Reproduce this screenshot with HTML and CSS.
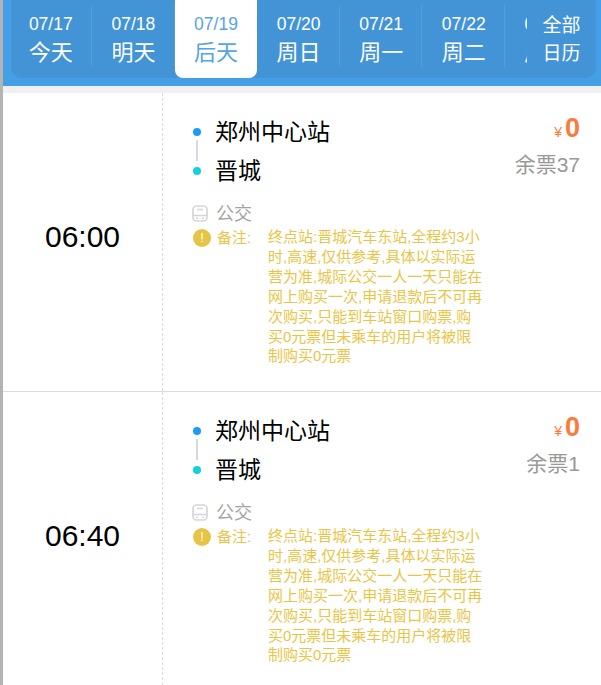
FILE: index.html
```html
<!DOCTYPE html>
<html lang="zh-CN">
<head>
    <meta charset="UTF-8">
    <meta name="viewport" content="width=device-width, initial-scale=1.0">
    <title>班次列表</title>
    <link rel="stylesheet" href="styles.css">
</head>
<body>
    <!-- Date bar -->
    <div class="date-bar">
        <div class="date-inner">
            <div class="date-list">
                <div class="date-item"><span class="date-day">07/17</span><span class="date-name">今天</span></div>
                <div class="date-item"><span class="date-day">07/18</span><span class="date-name">明天</span></div>
                <div class="date-item active"><span class="date-day">07/19</span><span class="date-name">后天</span></div>
                <div class="date-item"><span class="date-day">07/20</span><span class="date-name">周日</span></div>
                <div class="date-item"><span class="date-day">07/21</span><span class="date-name">周一</span></div>
                <div class="date-item"><span class="date-day">07/22</span><span class="date-name">周二</span></div>
                <div class="date-item"><span class="date-day">07/23</span><span class="date-name">周三</span></div>
            </div>
            <div class="date-all"><span>全部</span><span>日历</span></div>
        </div>
    </div>
    <div class="gap"></div>

    <!-- Trips -->
    <div class="trip">
        <div class="trip-time">06:00</div>
        <div class="trip-main">
            <div class="trip-top">
                <div class="stations">
                    <div class="station start">郑州中心站</div>
                    <div class="station end">晋城</div>
                </div>
                <div class="trip-price">
                    <div class="price"><span class="yen">¥</span><span class="amount">0</span></div>
                    <div class="left">余票37</div>
                </div>
            </div>
            <div class="trip-type">
                <svg class="bus-icon" viewBox="0 0 16 18"><rect x="1" y="1" width="14" height="15" rx="3.5" fill="none" stroke="#d6d6d6" stroke-width="1.7"/><path d="M1 10.5h14M5 4.5h6" fill="none" stroke="#d6d6d6" stroke-width="1.5"/><circle cx="5" cy="13.2" r="1" fill="#d6d6d6"/><circle cx="11" cy="13.2" r="1" fill="#d6d6d6"/></svg>
                <span>公交</span>
            </div>
            <div class="trip-note">
                <span class="note-icon">!</span>
                <span class="note-label">备注:</span>
                <p class="note-text">终点站:晋城汽车东站,全程约3小时,高速,仅供参考,具体以实际运营为准,城际公交一人一天只能在网上购买一次,申请退款后不可再次购买,只能到车站窗口购票,购买0元票但未乘车的用户将被限制购买0元票</p>
            </div>
        </div>
    </div>

    <div class="trip">
        <div class="trip-time">06:40</div>
        <div class="trip-main">
            <div class="trip-top">
                <div class="stations">
                    <div class="station start">郑州中心站</div>
                    <div class="station end">晋城</div>
                </div>
                <div class="trip-price">
                    <div class="price"><span class="yen">¥</span><span class="amount">0</span></div>
                    <div class="left">余票1</div>
                </div>
            </div>
            <div class="trip-type">
                <svg class="bus-icon" viewBox="0 0 16 18"><rect x="1" y="1" width="14" height="15" rx="3.5" fill="none" stroke="#d6d6d6" stroke-width="1.7"/><path d="M1 10.5h14M5 4.5h6" fill="none" stroke="#d6d6d6" stroke-width="1.5"/><circle cx="5" cy="13.2" r="1" fill="#d6d6d6"/><circle cx="11" cy="13.2" r="1" fill="#d6d6d6"/></svg>
                <span>公交</span>
            </div>
            <div class="trip-note">
                <span class="note-icon">!</span>
                <span class="note-label">备注:</span>
                <p class="note-text">终点站:晋城汽车东站,全程约3小时,高速,仅供参考,具体以实际运营为准,城际公交一人一天只能在网上购买一次,申请退款后不可再次购买,只能到车站窗口购票,购买0元票但未乘车的用户将被限制购买0元票</p>
            </div>
        </div>
    </div>
</body>
</html>
```

FILE: styles.css
```css
html, body {
    height: 100%;
    overflow: hidden;
}

body {
    margin: 0;
    background-color: #fff;
    border-left: 3px solid #b3b3b3;
    font-family: "Liberation Sans", "Noto Sans CJK SC", sans-serif;
}

.date-bar {
    height: 86px;
    padding: 0 5px 0 8px;
    box-sizing: border-box;
    background-color: #459fe6;
}

.date-inner {
    display: flex;
    height: 78px;
    background-color: #4394d7;
    border-radius: 0 0 10px 10px;
    overflow: hidden;
}

.date-list {
    display: flex;
    flex: 1;
    min-width: 0;
    overflow: hidden;
}

.date-item {
    flex: 0 0 82.6px;
    height: 78px;
    box-sizing: border-box;
    padding-top: 12px;
    display: flex;
    flex-direction: column;
    align-items: center;
    color: #fff;
    border-radius: 0 0 8px 8px;
    background-image: linear-gradient(#539ddb, #539ddb);
    background-size: 1px 62px;
    background-position: right 5px;
    background-repeat: no-repeat;
}

.date-item:first-child {
    margin-left: -1.5px;
}

.date-item.active {
    background: #fff;
    color: #55a4e4;
}

.date-day {
    font-size: 17.5px;
    line-height: 24px;
}

.date-name {
    font-size: 22px;
    line-height: 30px;
    margin-top: 2px;
}

.date-all {
    flex: 0 0 69px;
    height: 78px;
    box-sizing: border-box;
    padding-top: 12px;
    color: #fff;
    font-size: 19px;
    line-height: 28px;
    display: flex;
    flex-direction: column;
    align-items: center;
}

.gap {
    height: 7px;
    background-color: #f0eff4;
}

.trip {
    display: flex;
    height: 298px;
    border-bottom: 1px solid #d8dce6;
}

.trip-time {
    width: 160px;
    box-sizing: border-box;
    border-right: 1px dashed #d8dce6;
    padding-top: 126px;
    text-align: center;
    font-size: 30px;
    line-height: 36px;
    color: #000;
}

.trip-main {
    flex: 1;
    padding: 20px 21px 0 30px;
}

.trip-top {
    display: flex;
    justify-content: space-between;
}

.station {
    position: relative;
    padding-left: 22px;
    font-size: 23px;
    line-height: 39px;
    color: #000;
}

.station::before {
    content: "";
    position: absolute;
    left: 0;
    top: 15px;
    width: 8px;
    height: 8px;
    border-radius: 50%;
}

.station.start::before {
    background-color: #1a9bfc;
}

.station.end::before {
    background-color: #13d1dc;
}

.station.start::after {
    content: "";
    position: absolute;
    left: 3px;
    top: 27px;
    width: 2px;
    height: 21px;
    background-color: #d3d9e4;
}

.trip-price {
    text-align: right;
}

.price {
    color: #fc7a3a;
    line-height: 30px;
}

.yen {
    font-size: 14px;
    margin-right: 3px;
}

.amount {
    font-size: 27px;
    font-weight: bold;
}

.left {
    margin-top: 5px;
    font-size: 21px;
    line-height: 26px;
    color: #999;
}

.trip-type {
    display: flex;
    align-items: center;
    margin-top: 11px;
    font-size: 18px;
    line-height: 24px;
    color: #a3a3a3;
}

.bus-icon {
    width: 16px;
    height: 18px;
    margin: 0 8px 0 -1px;
}

.trip-note {
    display: flex;
    align-items: flex-start;
    margin-top: 1px;
    color: #e9c546;
    font-size: 14px;
}

.note-icon {
    flex: none;
    width: 18px;
    height: 18px;
    margin: 2px 6px 0 0;
    border-radius: 50%;
    background-color: #e6c444;
    color: #fff;
    text-align: center;
    font-size: 13px;
    line-height: 18px;
}

.note-label {
    flex: none;
    width: 51px;
    font-size: 15px;
    line-height: 22px;
}

.note-text {
    width: 216px;
    margin: 0;
    font-size: 15px;
    line-height: 19.9px;
    word-break: break-all;
}
```
